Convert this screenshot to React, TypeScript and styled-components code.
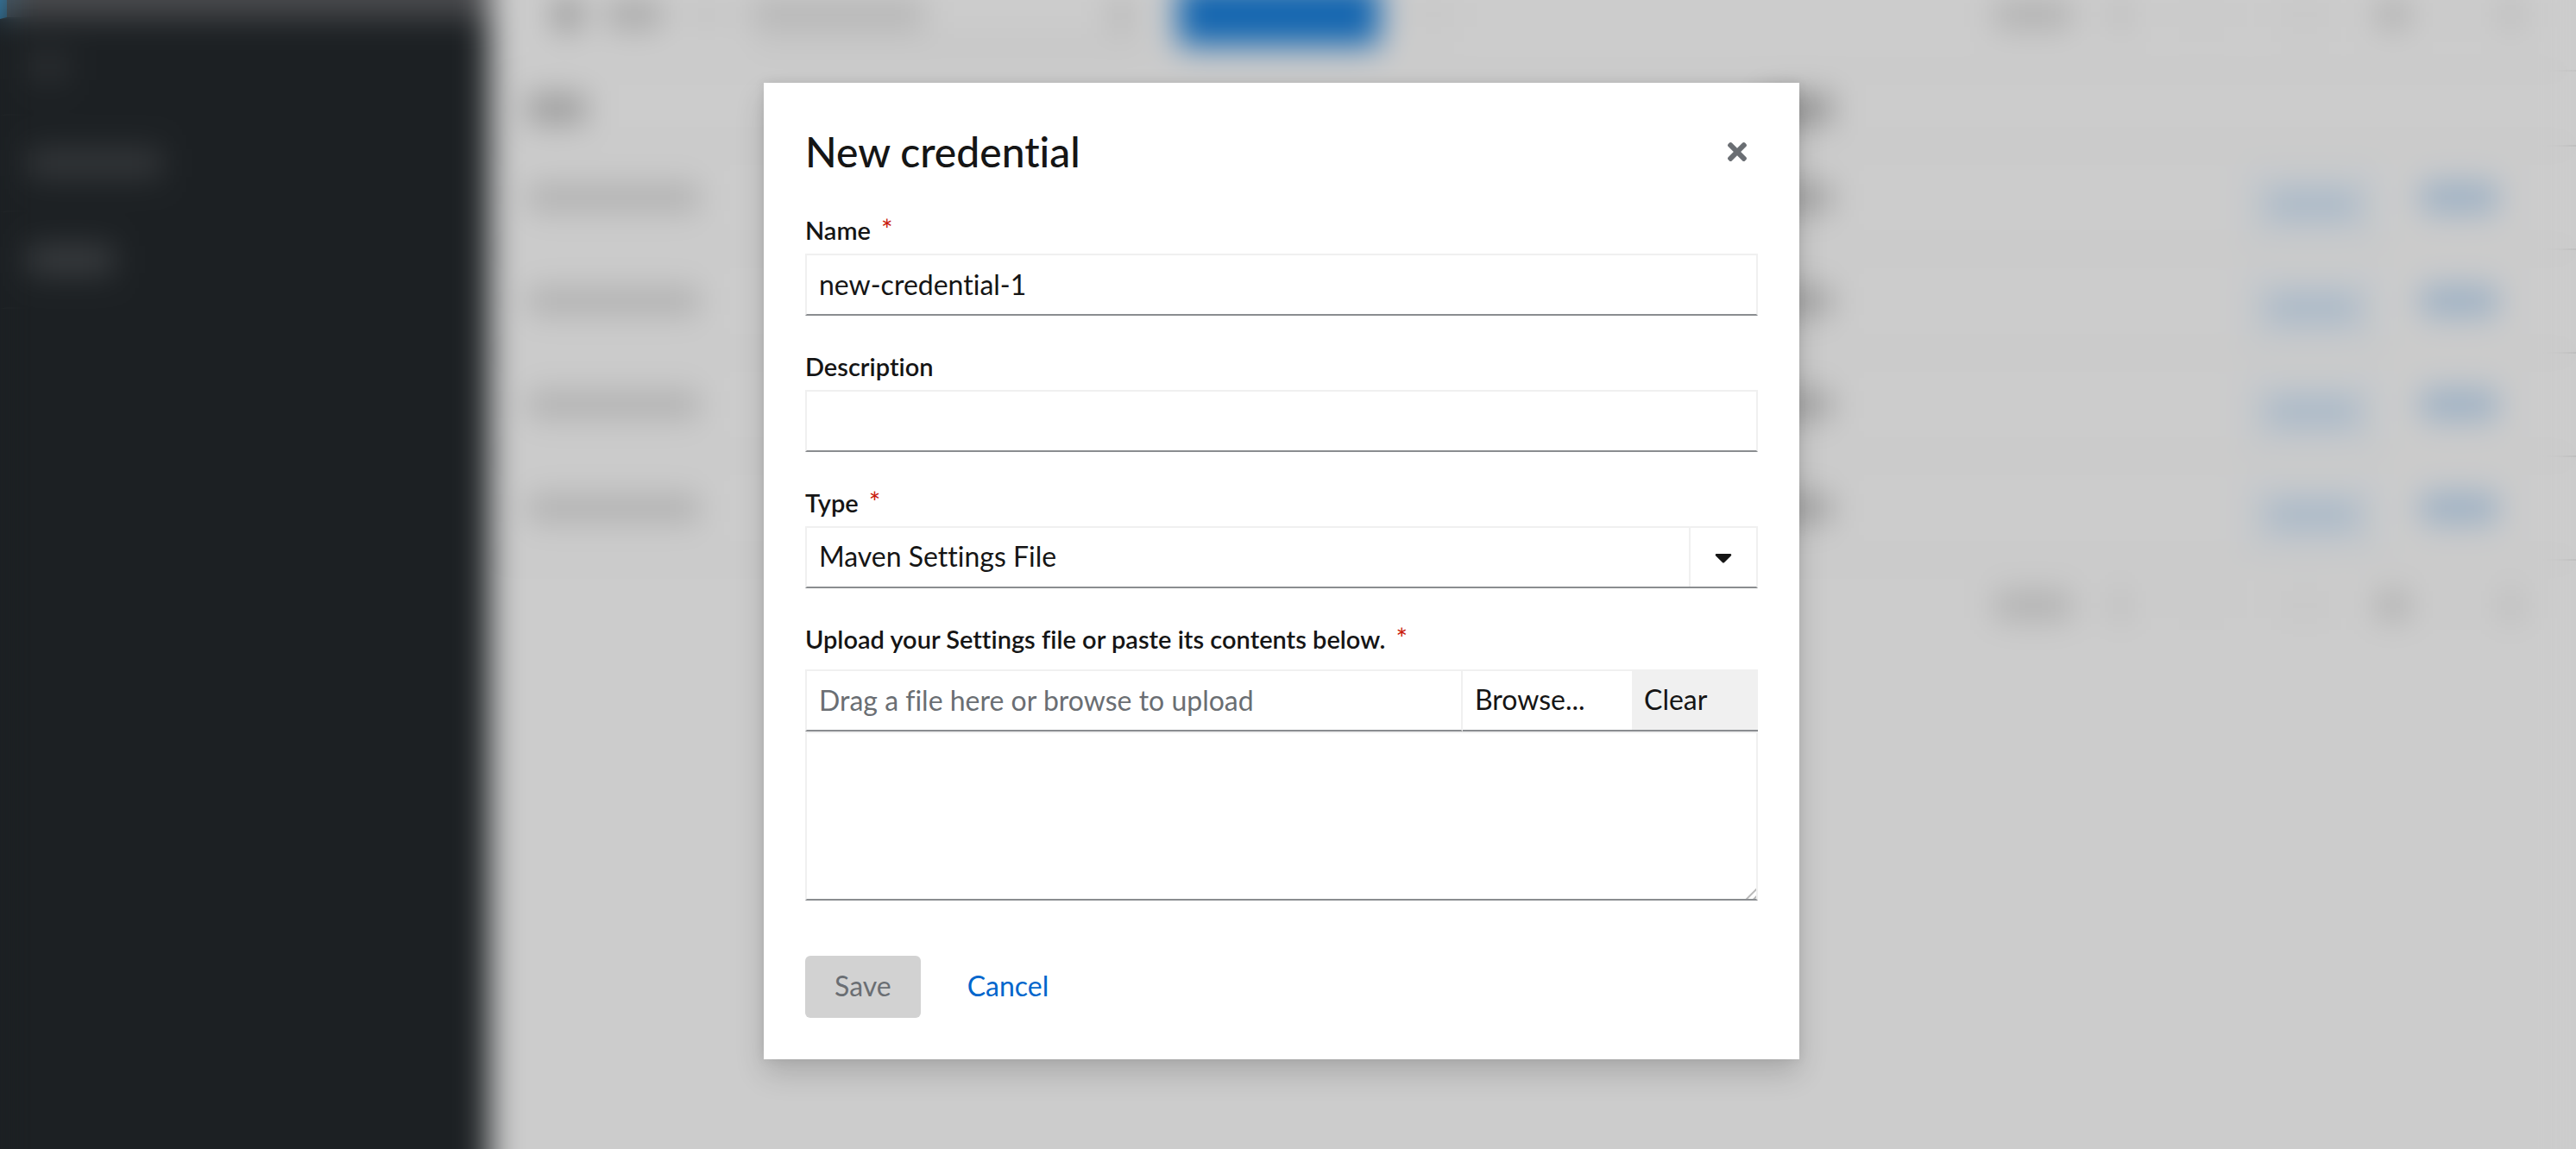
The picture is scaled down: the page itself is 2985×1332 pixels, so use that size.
import React, { useState } from 'react';
import styled, { createGlobalStyle, css } from 'styled-components';
import { FaCaretDown, FaTimes } from 'react-icons/fa';

const color = {
  text: '#151515',
  muted: '#6a6e73',
  line: '#f0f0f0',
  lineStrong: '#8a8d90',
  link: '#0066cc',
  danger: '#c9190b',
  disabled: '#d2d2d2',
};

const GlobalStyle = createGlobalStyle`
  *, *::before, *::after { box-sizing: border-box; }
  body {
    margin: 0;
    color: ${color.text};
    font-family: Lato, "Liberation Sans", sans-serif;
    font-size: 32px;
    line-height: 48px;
    font-variant-ligatures: none;
  }
  button, input, select, textarea {
    font: inherit;
    font-variant-ligatures: none;
    color: inherit;
  }
`;

/* ---------- Page shell ---------- */

const Page = styled.div`
  position: relative;
  display: grid;
  place-items: center;
  min-height: 100vh;
  padding: 0 15px 8px 0;
  overflow: hidden;
`;

const Layer = styled.div<{ $blurred?: boolean }>`
  position: absolute;
  inset: -64px 0;
  display: flex;
  background: #cccccc;
  ${(p) => p.$blurred && css`filter: blur(18px);`}
`;

/* ---------- Console behind the dialog ---------- */

const Sidebar = styled.div`
  flex: none;
  width: 19%;
  background: #1c2023;
`;

const NavItem = styled.div<{ $current?: boolean }>`
  display: flex;
  align-items: center;
  height: ${(p) => (p.$current ? 86 : 112)}px;
  padding-left: 24px;
  border-left: 8px solid ${(p) => (p.$current ? '#2b7fb0' : 'transparent')};
  border-bottom: 2px solid #24282b;
  background: ${(p) => (p.$current ? '#4a4b4e' : 'transparent')};
`;

const Bar = styled.span<{ $w: number; $h?: number; $c?: string }>`
  flex: none;
  width: ${(p) => p.$w}px;
  height: ${(p) => p.$h ?? 32}px;
  background: ${(p) => p.$c ?? '#b0b0b0'};
`;

const Content = styled.div`
  flex: 1;
  min-width: 0;
`;

const Toolbar = styled.div`
  display: flex;
  align-items: flex-end;
  justify-content: space-between;
  height: 147px;
  padding: 0 64px 28px 76px;
  border-bottom: 2px solid #bcbcbc;
`;

const Tools = styled.div<{ $gap: number }>`
  display: flex;
  align-items: center;
  gap: ${(p) => p.$gap}px;
  height: 72px;
`;

const SearchField = styled.div`
  display: flex;
  align-items: center;
  justify-content: space-between;
  width: 462px;
  height: 72px;
  padding: 0 24px 0 0;
  border-bottom: 2px solid #909090;
`;

const Primary = styled.div`
  width: 234px;
  height: 72px;
  background: #1466b0;
`;

const Row = styled.div<{ $head?: boolean }>`
  display: grid;
  grid-template-columns: 60% 1fr 150px 110px;
  column-gap: 50px;
  align-items: center;
  height: ${(p) => (p.$head ? 87 : 120)}px;
  padding: 0 70px 0 44px;
  border-bottom: 2px solid #b4b4b4;
`;

const Outline = styled.div`
  display: flex;
  align-items: center;
  justify-content: center;
  width: 150px;
  height: 72px;
  margin-top: 16px;
  border: 2px solid #8fb0d0;
`;

const Pager = styled.div`
  display: flex;
  justify-content: flex-end;
  padding: 16px 64px 0 0;
`;

function PagerMarks() {
  return (
    <Tools $gap={48}>
      <Bar $w={90} />
      <Bar $w={16} $c="#b4b4b4" />
      <Bar $w={76} $c="#cacaca" />
      <Bar $w={68} $c="#c8c8c8" />
      <Bar $w={40} $c="#b0b0b0" />
      <Bar $w={8} $c="#c2c2c2" />
      <Bar $w={24} $c="#b8b8b8" />
    </Tools>
  );
}

function Console({ blurred }: { blurred?: boolean }) {
  return (
    <Layer $blurred={blurred} aria-hidden="true">
      <Sidebar>
        <NavItem $current />
        <NavItem><Bar $w={48} $c="#2c2f32" /></NavItem>
        <NavItem><Bar $w={156} $c="#36393c" /></NavItem>
        <NavItem><Bar $w={100} $c="#3c3f42" /></NavItem>
      </Sidebar>
      <Content>
        <Toolbar>
          <Tools $gap={32}>
            <Bar $w={28} $h={36} $c="#909090" />
            <Bar $w={64} $c="#a8a8a8" />
            <Bar $w={40} $c="#c4c4c4" />
            <SearchField>
              <Bar $w={200} $c="#b4b4b4" />
              <Bar $w={20} $c="#acacac" />
            </SearchField>
            <Primary />
            <Bar $w={60} $c="#c8c8c8" />
          </Tools>
          <PagerMarks />
        </Toolbar>
        <Row $head>
          <Bar $w={68} $c="#989898" />
          <Bar $w={80} $c="#909090" />
        </Row>
        {[1, 2, 3, 4].map((n) => (
          <Row key={n}>
            <Bar $w={200} />
            <Bar $w={80} $c="#a0a0a0" />
            <Outline><Bar $w={112} $h={36} $c="#a8b8c8" /></Outline>
            <Bar $w={90} $h={36} $c="#9cb0c4" />
          </Row>
        ))}
        <Pager><PagerMarks /></Pager>
      </Content>
    </Layer>
  );
}

/* ---------- Dialog ---------- */

const Dialog = styled.section`
  position: relative;
  width: min(1200px, 100%);
  padding: 48px;
  background: #ffffff;
  box-shadow: 0 16px 32px rgba(3, 3, 3, 0.16), 0 0 12px rgba(3, 3, 3, 0.08);
`;

const DialogHeader = styled.header`
  display: flex;
  align-items: center;
  justify-content: space-between;
  margin-bottom: 40px;
`;

const Title = styled.h1`
  margin: 0;
  font-size: 48px;
  font-weight: 500;
  line-height: 64px;
`;

const CloseButton = styled.button`
  display: flex;
  margin: 0;
  padding: 8px;
  border: 0;
  background: none;
  color: ${color.muted};
`;

const Form = styled.form`
  display: flex;
  flex-direction: column;
  gap: 40px;
`;

const Field = styled.div<{ $gap?: number }>`
  display: flex;
  flex-direction: column;
  gap: ${(p) => p.$gap ?? 8}px;
`;

const Label = styled.label`
  display: flex;
  gap: 12px;
  font-size: 29px;
  font-weight: 600;
  line-height: 38px;
`;

const Required = styled.span`
  color: ${color.danger};
  font-size: 32px;
  font-weight: 400;
  line-height: 36px;
`;

const control = css`
  width: 100%;
  height: 72px;
  margin: 0;
  padding: 0 14px 2px;
  border: 2px solid ${color.line};
  border-bottom-color: ${color.lineStrong};
  border-radius: 0;
  background: #ffffff;
  outline: 0;
`;

const TextInput = styled.input`
  ${control}
  &::placeholder { color: ${color.muted}; opacity: 1; }
`;

const SelectBox = styled.div`
  display: grid;
  grid-template-columns: 1fr 80px;
`;

const Select = styled.select`
  ${control}
  grid-area: 1 / 1 / 2 / 3;
  appearance: none;
`;

const Toggle = styled.span`
  grid-area: 1 / 2 / 2 / 3;
  display: flex;
  align-items: center;
  justify-content: center;
  margin: 2px 2px 2px 0;
  border-left: 2px solid ${color.line};
  pointer-events: none;
`;

const FileUpload = styled.div`
  display: flex;
  flex-direction: column;
`;

const FileRow = styled.div`
  display: flex;
`;

const FileButton = styled.button<{ $filled?: boolean; $w: number }>`
  ${control}
  flex: none;
  width: ${(p) => p.$w}px;
  border-left: 0;
  border-right: 0;
  text-align: left;
  ${(p) => p.$filled && css`background: ${color.line};`}
`;

const FileContents = styled.textarea`
  ${control}
  display: block;
  height: 196px;
  padding: 12px 14px;
  resize: vertical;

  &::-webkit-scrollbar { width: 18px; height: 18px; }
  &::-webkit-resizer {
    background: linear-gradient(
      135deg,
      transparent 12px, #b8b8b8 13px, #b8b8b8 14px, transparent 15px,
      transparent 18px, #b8b8b8 19px, #b8b8b8 20px, transparent 21px
    );
  }
`;

const Actions = styled.footer`
  display: flex;
  gap: 20px;
  padding-top: 24px;
`;

const Action = styled.button<{ $link?: boolean }>`
  height: 72px;
  padding: 0 34px 2px;
  border: 0;
  border-radius: 6px;
  background: ${(p) => (p.$link ? 'transparent' : color.disabled)};
  color: ${(p) => (p.$link ? color.link : color.muted)};
`;

export default function App() {
  const [name, setName] = useState('new-credential-1');
  const [description, setDescription] = useState('');
  const [contents, setContents] = useState('');

  return (
    <>
      <GlobalStyle />
      <Page>
        <Console />
        <Console blurred />
        <Dialog role="dialog" aria-modal="true" aria-labelledby="dialog-title">
          <DialogHeader>
            <Title id="dialog-title">New credential</Title>
            <CloseButton type="button" aria-label="Close">
              <FaTimes size={32} />
            </CloseButton>
          </DialogHeader>
          <Form onSubmit={(e) => e.preventDefault()}>
            <Field>
              <Label htmlFor="name">Name <Required aria-hidden="true">*</Required></Label>
              <TextInput id="name" required value={name} onChange={(e) => setName(e.target.value)} />
            </Field>
            <Field>
              <Label htmlFor="description">Description</Label>
              <TextInput
                id="description"
                value={description}
                onChange={(e) => setDescription(e.target.value)}
              />
            </Field>
            <Field>
              <Label htmlFor="type">Type <Required aria-hidden="true">*</Required></Label>
              <SelectBox>
                <Select id="type" required defaultValue="maven">
                  <option value="maven">Maven Settings File</option>
                </Select>
                <Toggle><FaCaretDown size={32} /></Toggle>
              </SelectBox>
            </Field>
            <Field $gap={16}>
              <Label htmlFor="contents">
                Upload your Settings file or paste its contents below.
                <Required aria-hidden="true">*</Required>
              </Label>
              <FileUpload>
                <FileRow>
                  <TextInput
                    readOnly
                    aria-label="File name"
                    placeholder="Drag a file here or browse to upload"
                  />
                  <FileButton type="button" $w={196}>Browse...</FileButton>
                  <FileButton type="button" $w={146} $filled onClick={() => setContents('')}>
                    Clear
                  </FileButton>
                </FileRow>
                <FileContents
                  id="contents"
                  required
                  value={contents}
                  onChange={(e) => setContents(e.target.value)}
                />
              </FileUpload>
            </Field>
            <Actions>
              <Action type="submit" disabled>Save</Action>
              <Action type="button" $link>Cancel</Action>
            </Actions>
          </Form>
        </Dialog>
      </Page>
    </>
  );
}
